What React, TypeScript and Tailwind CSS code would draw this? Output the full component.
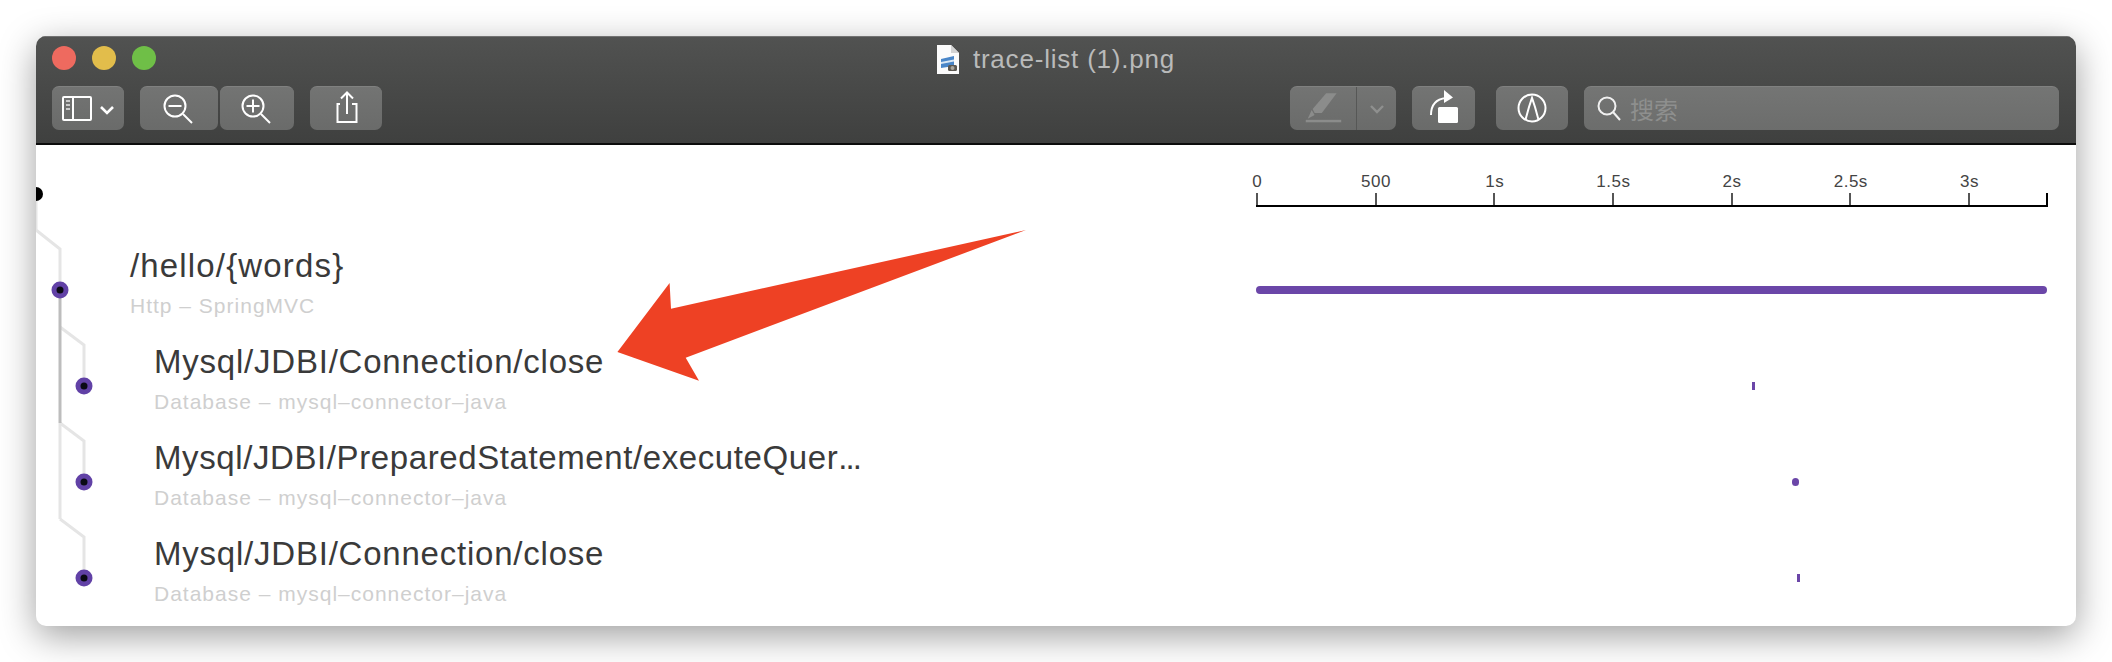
const ticks = ['0', '500', '1s', '1.5s', '2s', '2.5s', '3s'];

const spans = [
  { title: '/hello/{words}', track: 'tracking-[1.16px]', sub: 'Http – SpringMVC', indent: 'pl-[94px]', bar: 'ml-0 w-[791px] h-2 rounded-full' },
  { title: 'Mysql/JDBI/Connection/close', track: 'tracking-[0.78px]', sub: 'Database – mysql–connector–java', indent: 'pl-[118px]', bar: 'ml-[496px] w-[3px] h-2' },
  { title: 'Mysql/JDBI/PreparedStatement/executeQuer', track: 'tracking-[0.6px]', more: true, sub: 'Database – mysql–connector–java', indent: 'pl-[118px]', bar: 'ml-[536px] w-[7px] h-2 rounded-full' },
  { title: 'Mysql/JDBI/Connection/close', track: 'tracking-[0.78px]', sub: 'Database – mysql–connector–java', indent: 'pl-[118px]', bar: 'ml-[541px] w-[3px] h-2' },
];

function ToolButton({ className = '', children }: { className?: string; children?: React.ReactNode }) {
  return (
    <div className={`flex h-11 items-center justify-center rounded-[7px] border-t border-[#808180] bg-gradient-to-b from-[#737473] to-[#6a6b6a] ${className}`}>
      {children}
    </div>
  );
}

function DocIcon() {
  return (
    <svg width="22" height="29" viewBox="0 0 22 29" className="shrink-0">
      <path d="M0 0H14L22 8V29H0Z" fill="#fbfbfb" />
      <path d="M14 0V8H22Z" fill="#d4d4d4" />
      <path d="M4 14L17 11V21L4 23Z" fill="#4a86c8" />
      <path d="M4 17L17 14.5V16.5L4 19Z" fill="#dbe8f4" />
      <rect x="11" y="20" width="9" height="6" rx="1.5" fill="#5b5750" />
      <circle cx="15.5" cy="23" r="2" fill="#a9a59c" />
    </svg>
  );
}

function Toolbar() {
  return (
    <div className="h-[109px] shrink-0 border-b-2 border-[#0c0c0c] bg-gradient-to-b from-[#515251] to-[#3f403f] shadow-[inset_0_1px_0_#727272]">
      <div className="grid h-[50px] grid-cols-[1fr_auto_1fr] items-start">
        <div className="flex gap-4 pl-4 pt-2.5">
          <div className="h-6 w-6 rounded-full bg-[#ee6a5f]" />
          <div className="h-6 w-6 rounded-full bg-[#e2bd4b]" />
          <div className="h-6 w-6 rounded-full bg-[#6fbf47]" />
        </div>
        <div className="flex items-center gap-[14px] pt-[7px]">
          <DocIcon />
          <span className="text-[26px] leading-[32px] tracking-[0.8px] text-[#b9baba] font-['Liberation_Sans',sans-serif]">trace-list (1).png</span>
        </div>
        <div />
      </div>
      <div className="flex items-start pl-4 pr-[17px]">
        <ToolButton className="w-[72px]">
          <svg width="72" height="44" viewBox="0 0 72 44" fill="none" stroke="#fff" strokeWidth="2">
            <rect x="11" y="10" width="28" height="23" rx="1" />
            <path d="M21 10V33" />
            <path d="M14 14H18M14 18H18M14 22H18" stroke="#c9c9c9" />
            <path d="M49 20L55 26L61 20" strokeWidth="2.6" />
          </svg>
        </ToolButton>
        <ToolButton className="ml-4 w-[78px]">
          <svg width="78" height="44" viewBox="0 0 78 44" fill="none" stroke="#fff" strokeWidth="2">
            <circle cx="35" cy="19" r="10.5" />
            <path d="M28.5 19H41.5" />
            <path d="M43 27L52 36" />
          </svg>
        </ToolButton>
        <ToolButton className="ml-0.5 w-[74px]">
          <svg width="74" height="44" viewBox="0 0 74 44" fill="none" stroke="#fff" strokeWidth="2">
            <circle cx="33" cy="19" r="10.5" />
            <path d="M26.5 19H39.5M33 12.5V25.5" />
            <path d="M41 27L50 36" />
          </svg>
        </ToolButton>
        <ToolButton className="ml-4 w-[72px]">
          <svg width="72" height="44" viewBox="0 0 72 44" fill="none" stroke="#fff" strokeWidth="2">
            <path d="M30 17H27.5V35H46.5V17H42" />
            <path d="M37 27V6M31 11.5L37 5.5L43 11.5" />
          </svg>
        </ToolButton>
        <div className="ml-auto flex h-11 w-[106px] rounded-[7px] border-t border-[#808180] bg-gradient-to-b from-[#737473] to-[#6a6b6a]">
          <div className="flex w-[67px] items-center justify-center border-r border-[#565756]">
            <svg width="67" height="44" viewBox="0 0 67 44" fill="#8b8c8b">
              <path d="M36.7 6H47.3L32.3 26H25L23 22Z" />
              <path d="M22 23L25 28L18 32Z" />
              <rect x="16" y="33" width="36" height="2.5" />
            </svg>
          </div>
          <div className="flex flex-1 items-center justify-center">
            <svg width="16" height="12" viewBox="0 0 16 12" fill="none" stroke="#8f908f" strokeWidth="2.4">
              <path d="M2 3L8 9L14 3" />
            </svg>
          </div>
        </div>
        <ToolButton className="ml-4 w-[63px]">
          <svg width="63" height="44" viewBox="0 0 63 44" fill="none">
            <rect x="26" y="20" width="20" height="16" rx="1.5" fill="#fff" />
            <path d="M19 28C19 17 25 12 34 11" stroke="#fff" strokeWidth="2" />
            <path d="M32 3L41 10.5L32 16Z" fill="#fff" />
          </svg>
        </ToolButton>
        <ToolButton className="ml-[21px] w-[72px]">
          <svg width="72" height="44" viewBox="0 0 72 44" fill="none" stroke="#fff" strokeWidth="2">
            <circle cx="36" cy="21" r="13.5" />
            <path d="M29.7 32L33 20L36 11L39 20L42.3 32" />
          </svg>
        </ToolButton>
        <div className="ml-4 flex h-11 w-[475px] items-center rounded-[7px] border-t border-[#808180] bg-gradient-to-b from-[#747574] to-[#6c6d6c] pl-3">
          <svg width="28" height="34" viewBox="0 0 28 34" fill="none" stroke="#f0f0f0" strokeWidth="2" className="shrink-0">
            <circle cx="11" cy="14" r="8.5" />
            <path d="M17 20L24 28" />
          </svg>
          <span className="ml-1.5 text-2xl leading-none text-[#8e8f8e] font-['Noto_Sans_CJK_SC',sans-serif]">搜索</span>
        </div>
      </div>
    </div>
  );
}

function Ruler() {
  return (
    <div className="h-[97px] shrink-0 pl-[1220px] pt-[26px]">
      <div className="-ml-[58px] flex h-[22px] items-center">
        {ticks.map((t) => (
          <span key={t} className="w-[118.7px] shrink-0 text-center text-[17px] leading-[22px] tracking-[0.5px] text-[#444]">{t}</span>
        ))}
      </div>
      <div className="flex h-[14px] w-[792px] border-b-2 border-black">
        {ticks.slice(0, 6).map((t) => (
          <div key={t} className="h-full w-[118.7px] shrink-0 border-l-2 border-[#555]" />
        ))}
        <div className="h-full flex-1 border-x-2 border-l-[#555] border-r-black" />
      </div>
    </div>
  );
}

function TreeLines() {
  const light = '#e5e5e5';
  return (
    <svg width="100" height="481" viewBox="36 145 100 481" fill="none" strokeWidth="3" className="absolute left-0 top-0">
      <path d="M36 194V230L60 249V290" stroke={light} />
      <path d="M60 327L84 345V386" stroke={light} />
      <path d="M60 423L84 441V482" stroke={light} />
      <path d="M60 519L84 537V578" stroke={light} />
      <path d="M60 423V519" stroke={light} />
      <path d="M60 290V423" stroke="#bdbdbd" />
      <circle cx="36" cy="194" r="7" fill="#000" stroke="none" />
      {[[60, 290], [84, 386], [84, 482], [84, 578]].map(([x, y]) => (
        <g key={y} stroke="none">
          <circle cx={x} cy={y} r="8.5" fill="#6141a6" />
          <circle cx={x} cy={y} r="3.5" fill="#0a0a14" />
        </g>
      ))}
    </svg>
  );
}

export default function App() {
  return (
    <div className="h-[662px] w-[2112px] bg-white pl-9 pt-9 font-['Liberation_Sans',sans-serif]">
      <div className="flex h-[590px] w-[2040px] flex-col overflow-hidden rounded-[10px] bg-white shadow-[0_10px_36px_rgba(0,0,0,0.38)]">
        <Toolbar />
        <div className="relative flex-1">
          <TreeLines />
          <Ruler />
          {spans.map((s, i) => (
            <div key={i} className="flex h-24 items-center">
              <div className={`flex h-full w-[1220px] shrink-0 flex-col ${s.indent}`}>
                <span className={`mt-1 text-[33px] leading-10 text-[#3a3a3a] ${s.track}`}>
                  {s.title}
                  {s.more && <span className="tracking-[-2px]">...</span>}
                </span>
                <span className="text-[21px] leading-[40px] tracking-[1px] text-[#cfcfcf]">{s.sub}</span>
              </div>
              <div className={`bg-[#6b46a8] ${s.bar}`} />
            </div>
          ))}
          {/* annotation arrow drawn over the list */}
          <svg width="410" height="151" viewBox="617 230 410 151" className="absolute left-[581px] top-[85px]">
            <path d="M1026 230L671 308.7L669.6 283L617.4 352L699 380.7L685.7 357.7Z" fill="#ee4124" />
          </svg>
        </div>
      </div>
    </div>
  );
}
